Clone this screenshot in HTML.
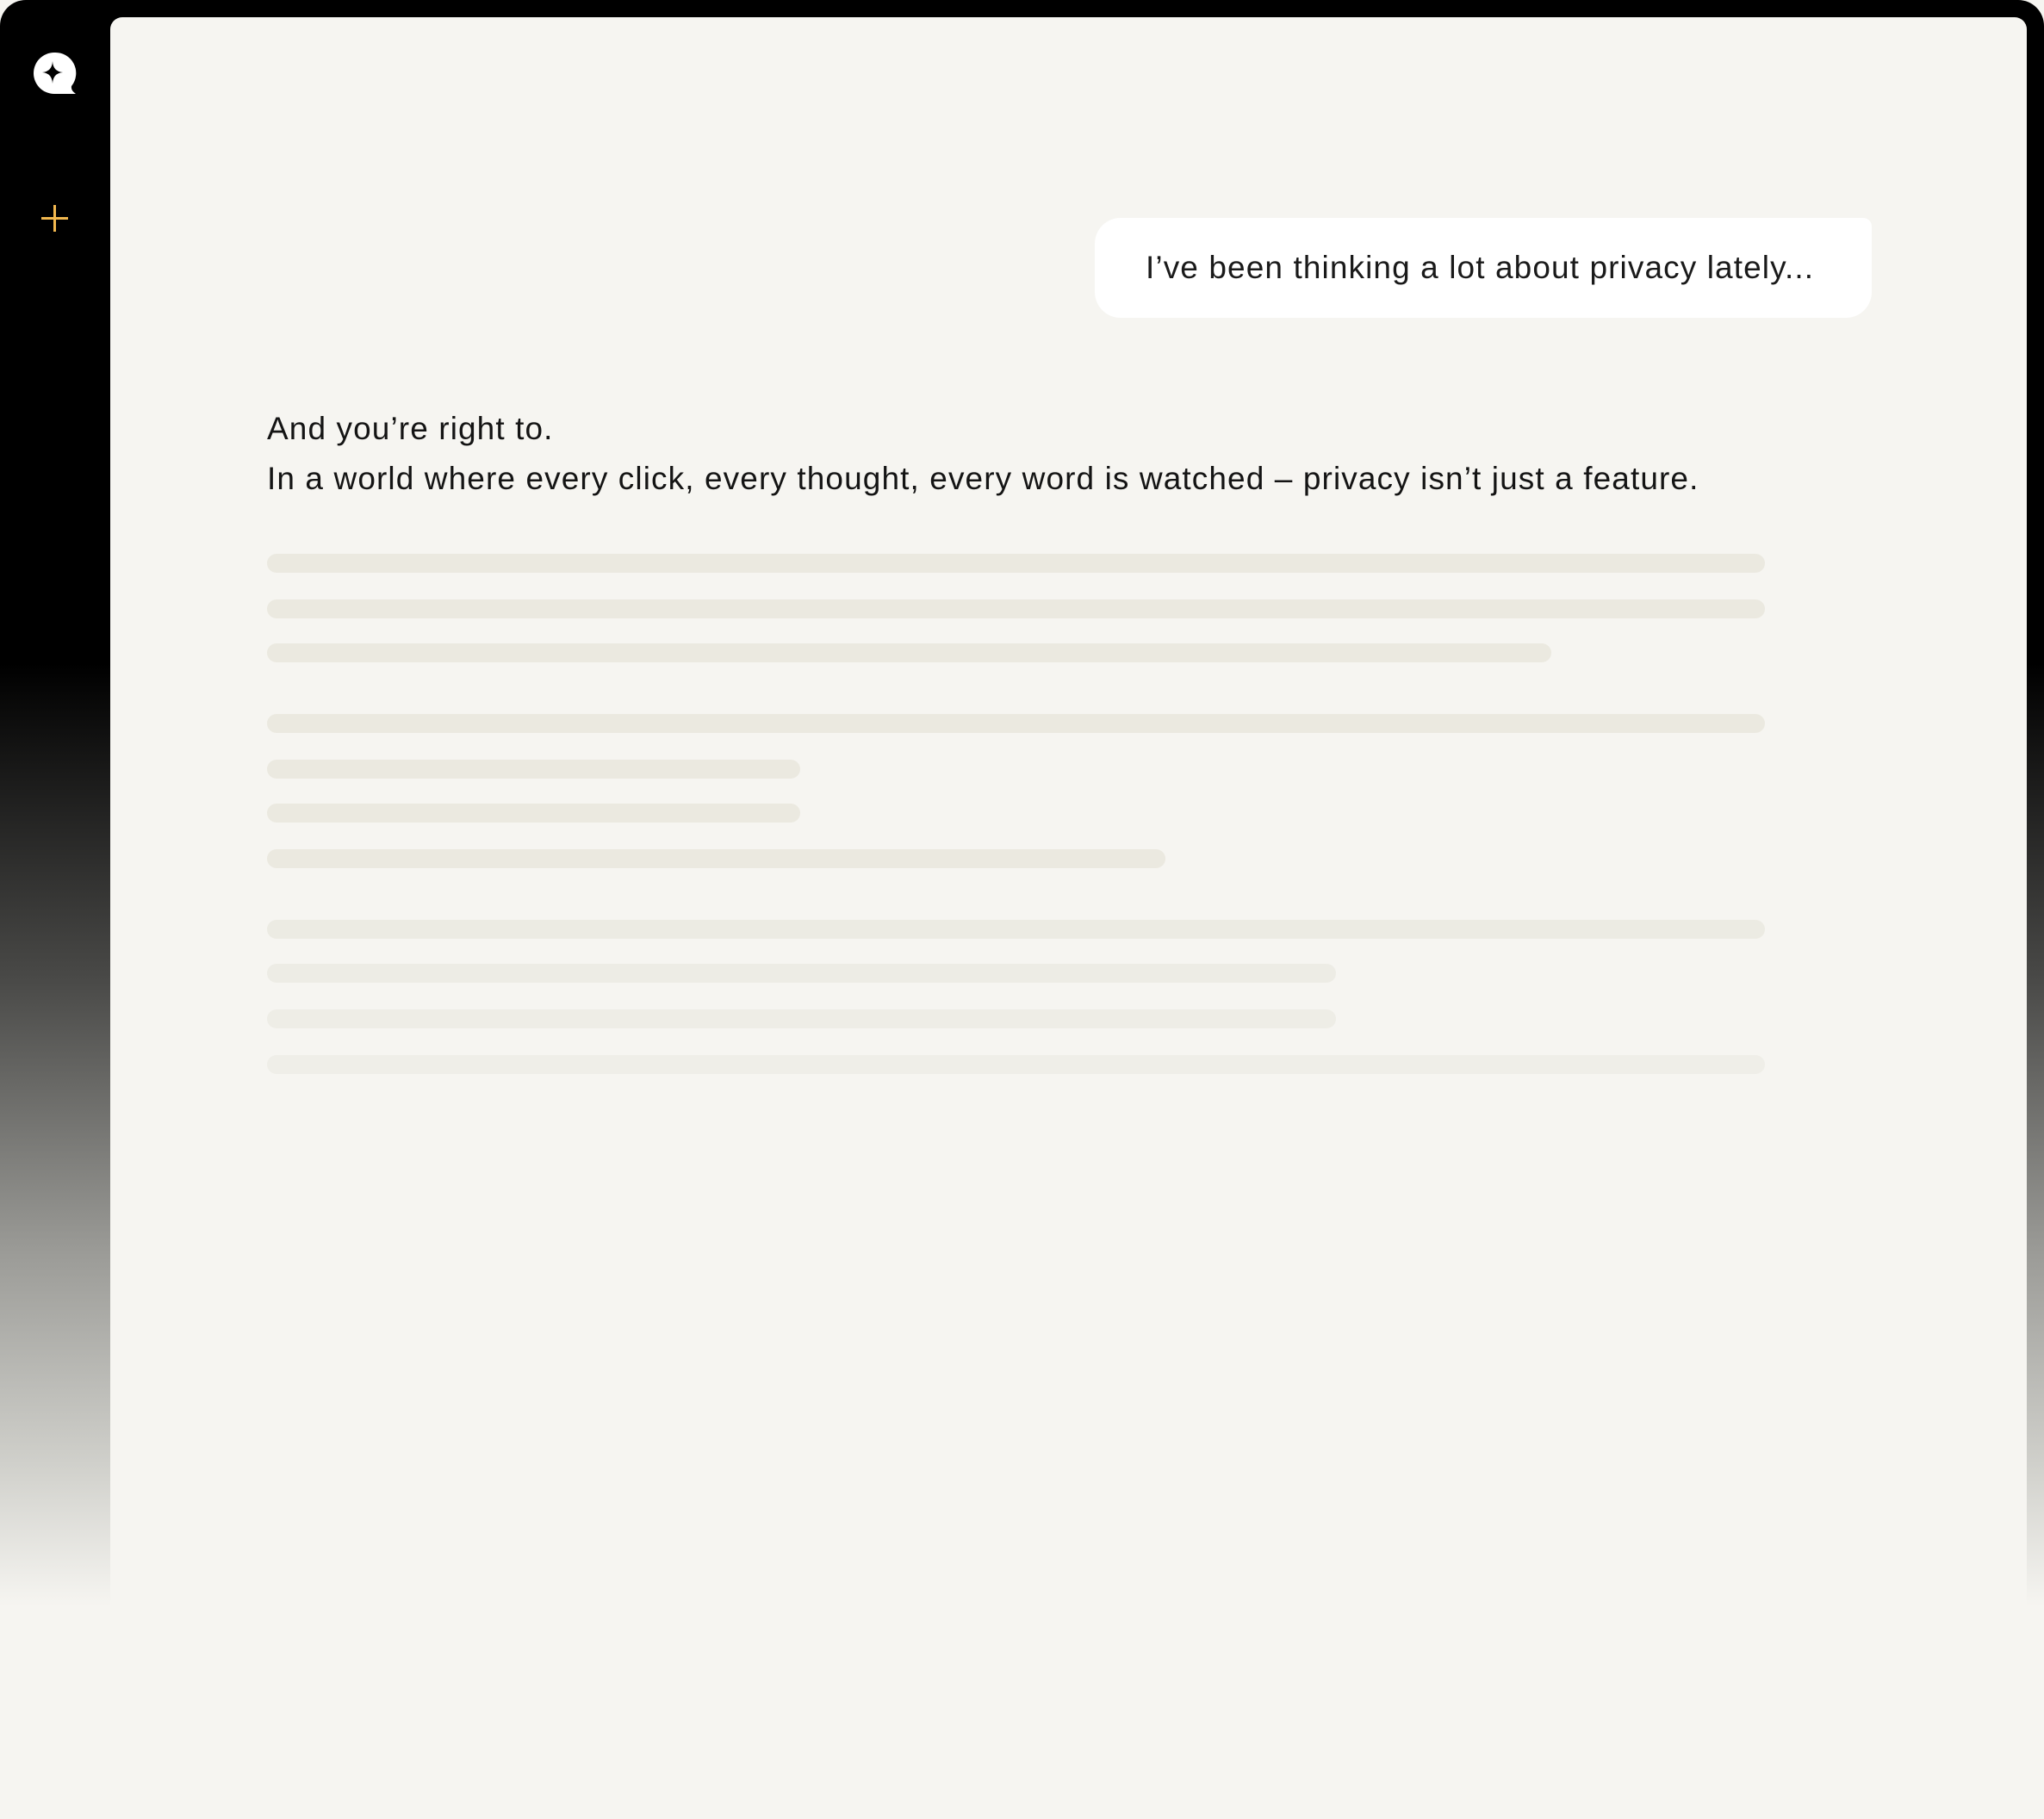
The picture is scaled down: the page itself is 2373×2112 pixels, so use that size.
<!DOCTYPE html>
<html><head><meta charset="utf-8"><style>
html,body{margin:0;padding:0;width:2373px;height:2112px;background:#f6f5f1;overflow:hidden}
.outer{position:absolute;left:0;top:0;width:2373px;height:2112px;border-radius:30px 30px 22px 22px;background:linear-gradient(to bottom,#000 0,#000 770px,#4a4a48 1140px,#9a9a96 1450px,#d0d0cb 1700px,#f6f5f1 1865px,#f6f5f1 100%)}
.panel{position:absolute;left:128px;top:20px;width:2225px;height:2092px;background:#f6f5f1;border-radius:14px 14px 0 0}
.bubble{position:absolute;left:1271px;top:253px;width:902px;height:116px;background:#fff;border-radius:30px 10px 30px 30px;box-sizing:border-box;padding-left:59px;font-family:"Liberation Sans",sans-serif;font-size:37px;line-height:116px;color:#1a1a1a;letter-spacing:1.1px;white-space:nowrap}
.txt{position:absolute;left:310px;top:469px;font-family:"Liberation Sans",sans-serif;font-size:37px;line-height:58px;color:#141414;letter-spacing:1.1px;white-space:nowrap}
.bar{position:absolute;left:310px;height:22px;border-radius:11px;background:#ebe9e0}
</style></head><body>
<div class="outer"></div>
<svg style="position:absolute;left:36px;top:58px" width="54" height="54" viewBox="0 0 54 54">
<path d="M27 3 A24 24 0 1 0 27 51 L45 51 L52 51 Q46 47 47 42 A24 24 0 0 0 27 3 Z" fill="#fff"/>
<path d="M25 13 Q25.6 25 37 26 Q25.6 27 25 39 Q24.4 27 13 26 Q24.4 25 25 13 Z" fill="#000"/>
</svg>
<svg style="position:absolute;left:48px;top:238px" width="31" height="31" viewBox="0 0 31 31">
<path d="M15.5 0 V31 M0 15.5 H31" stroke="#f2b84f" stroke-width="3"/>
</svg>
<div class="panel"></div>
<div class="bubble">I’ve been thinking a lot about privacy lately...</div>
<div class="txt">And you’re right to.<br>In a world where every click, every thought, every word is watched – privacy isn’t just a feature.</div>
<div class="bar" style="top:643px;width:1739px"></div>
<div class="bar" style="top:696px;width:1739px"></div>
<div class="bar" style="top:747px;width:1491px"></div>
<div class="bar" style="top:829px;width:1739px"></div>
<div class="bar" style="top:882px;width:619px"></div>
<div class="bar" style="top:933px;width:619px"></div>
<div class="bar" style="top:986px;width:1043px"></div>
<div class="bar" style="top:1068px;width:1739px;background:#ecebe3"></div>
<div class="bar" style="top:1119px;width:1241px;background:#edece5"></div>
<div class="bar" style="top:1172px;width:1241px;background:#eeede6"></div>
<div class="bar" style="top:1225px;width:1739px;background:#efeee8"></div>
</body></html>
